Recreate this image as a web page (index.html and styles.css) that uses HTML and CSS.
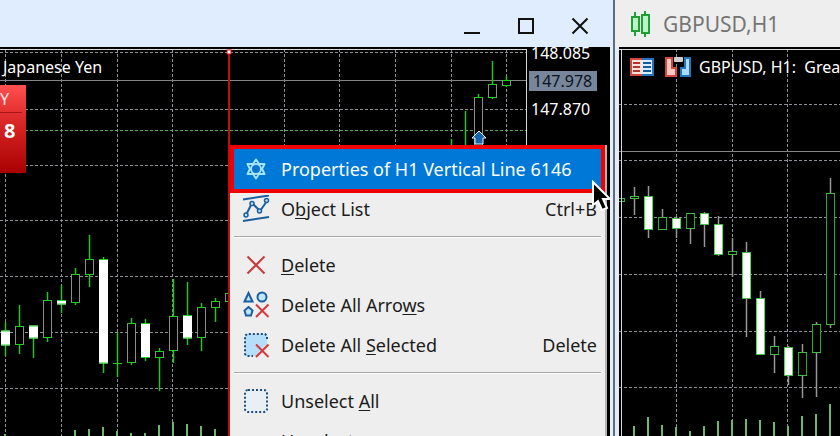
FILE: index.html
```html
<!DOCTYPE html>
<html lang="en">
<head>
    <meta charset="UTF-8">
    <meta name="viewport" content="width=device-width, initial-scale=1.0">
    <title>Charts</title>
    <link rel="stylesheet" href="styles.css">
</head>
<body>
    <div class="desktop">
        <section class="window window-main">
            <header class="titlebar titlebar-active">
                <button class="win-btn" type="button" aria-label="Minimize">
                    <svg width="18" height="18" viewBox="0 0 18 18"><path d="M1 16h16"/></svg>
                </button>
                <button class="win-btn" type="button" aria-label="Maximize">
                    <svg width="18" height="18" viewBox="0 0 18 18"><path d="M2 2h14v14H2z"/></svg>
                </button>
                <button class="win-btn" type="button" aria-label="Close">
                    <svg width="18" height="18" viewBox="0 0 18 18"><path d="M1.500 1.500l15 15M16.500 1.500l-15 15"/></svg>
                </button>
            </header>
            <div class="chart-frame">
                <div class="plot">
                    <svg class="chart" id="chart-left"></svg>
                    <div class="chart-head">Japanese Yen</div>
                    <button class="trade" type="button">
                        <span class="trade-label">Y</span>
                        <span class="trade-price">8</span>
                    </button>
                </div>
                <div class="axis">
                    <span class="price">148.085</span>
                    <span class="price price-now">147.978</span>
                    <span class="price">147.870</span>
                </div>
            </div>

            <div class="menu" role="menu">
                <button class="item active" type="button" role="menuitem">
                    <svg class="icon" viewBox="0 0 28 28" fill="none" stroke-linejoin="round">
                        <path d="M14 4.500l3 4.500h5.500L20 14l2.500 5H17l-3 4.500-3-4.500H5.500L8 14 5.500 9H11z" fill="#0b5ba8" stroke="#a4e4ff" stroke-width="2"/>
                        <circle cx="14" cy="14" r="5" fill="#0b74d0" stroke="#a4e4ff" stroke-width="2"/>
                    </svg>
                    <span class="label">Properties of H1 Vertical Line 6146</span>
                </button>
                <button class="item" type="button" role="menuitem">
                    <svg class="icon" viewBox="0 0 28 28" fill="none" stroke="#1b5f9e" stroke-width="2">
                        <path d="M1 4.500l26-4M1 26l26-4M4 20l6-12 8 8 7-10"/>
                        <g fill="#bfe6ff" stroke-width="1.500">
                            <circle cx="4" cy="20" r="2"/><circle cx="10" cy="8.500" r="2"/>
                            <circle cx="17.500" cy="16" r="2"/><circle cx="24.500" cy="5.500" r="2"/>
                        </g>
                    </svg>
                    <span class="label">O<u>b</u>ject List</span>
                    <span class="key">Ctrl+B</span>
                </button>
                <hr class="sep">
                <button class="item" type="button" role="menuitem">
                    <svg class="icon" viewBox="0 0 28 28" fill="none" stroke="#c93a3a" stroke-width="2">
                        <path d="M5.500 5.500l17 17M22.500 5.500l-17 17"/>
                    </svg>
                    <span class="label"><u>D</u>elete</span>
                </button>
                <button class="item" type="button" role="menuitem">
                    <svg class="icon" viewBox="0 0 28 28" fill="#bfe6ff" stroke="#1b5f9e" stroke-width="2">
                        <path d="M6.500 2l4 8.500h-8zM6.500 16l4 3.500-1.500 5H4l-1.500-5z"/>
                        <circle cx="20" cy="6" r="4.500"/>
                        <path d="M14 13.500l12.500 12.500M26.500 13.500L14 26" fill="none" stroke="#d43a3a"/>
                    </svg>
                    <span class="label">Delete All Arro<u>w</u>s</span>
                </button>
                <button class="item" type="button" role="menuitem">
                    <svg class="icon" viewBox="0 0 28 28" fill="none" stroke-width="2">
                        <path d="M3 3h22v10l-6 5-5 7H3z" fill="#b5defa"/>
                        <path d="M25 8V5l-2-2H5L3 5v18l2 2h6" stroke="#1b4f7e" stroke-dasharray="2 2"/>
                        <path d="M14 13.500l12.500 12.500M26.500 13.500L14 26" stroke="#d43a3a"/>
                    </svg>
                    <span class="label">Delete All <u>S</u>elected</span>
                    <span class="key">Delete</span>
                </button>
                <hr class="sep">
                <button class="item" type="button" role="menuitem">
                    <svg class="icon" viewBox="0 0 28 28">
                        <rect x="3" y="3" width="22" height="22" rx="3" fill="#e8f0f6" stroke="#1b4f7e" stroke-width="2" stroke-dasharray="2 2"/>
                    </svg>
                    <span class="label">Unselect <u>A</u>ll</span>
                </button>
                <button class="item" type="button" role="menuitem">
                    <span class="icon"></span>
                    <span class="label">Unselect</span>
                </button>
            </div>

            <svg class="cursor" width="22" height="32" viewBox="0 0 22 32">
                <path d="M2 2v23l5-4 4 9 5-2-4-9h7z" fill="#000" stroke="#fff" stroke-width="2"/>
            </svg>
        </section>

        <section class="window window-side">
            <header class="titlebar">
                <svg class="title-icon" width="22" height="28" viewBox="0 0 22 28" fill="#b9f5c4" stroke="#1e9e35" stroke-width="2">
                    <path d="M6 2v24M16 1v26" fill="none"/>
                    <path d="M3 7h7v14H3zM13 5h7v18h-7z"/>
                </svg>
                <h1 class="title">GBPUSD,H1</h1>
            </header>
            <div class="chart-frame">
                <div class="plot">
                    <svg class="chart" id="chart-right"></svg>
                    <div class="chart-head">
                        <svg width="26" height="20" viewBox="0 0 26 20">
                            <path d="M1 1h12v18H1z" fill="#d3473f"/>
                            <path d="M13 1h12v18H13z" fill="#2374bd"/>
                            <path d="M3 3h10v14H3z" fill="#ffe1dc"/>
                            <path d="M13 3h10v14H13z" fill="#d8efff"/>
                            <path d="M4 6h7M4 10h7M4 14h7" stroke="#b8332c" stroke-width="2"/>
                            <path d="M14 6h8M14 10h8M14 14h8" stroke="#17599a" stroke-width="2"/>
                        </svg>
                        <svg width="26" height="20" viewBox="0 0 26 20">
                            <path d="M1 1h6v10h4v8H1z" fill="#ffc9c2" stroke="#d3473f" stroke-width="2"/>
                            <path d="M25 1h-5v10h-4v8h9z" fill="#a9dcff" stroke="#2374bd" stroke-width="2"/>
                            <rect x="9" y="0" width="9" height="5" rx="1" fill="#d0d0d0"/>
                        </svg>
                        <span class="chart-name">GBPUSD, H1:&nbsp; Grea</span>
                    </div>
                </div>
            </div>
        </section>
    </div>

    <script src="script.js"></script>
</body>
</html>
```
FILE: styles.css
```css
* {
    margin: 0;
    padding: 0;
    box-sizing: border-box;
}

body {
    font-family: "Noto Sans", "Open Sans", sans-serif;
    font-size: 16px;
    background: #eee;
    overflow: hidden;
}

button {
    font: inherit;
    color: inherit;
    background: none;
    border: none;
}

.desktop {
    display: flex;
    height: 100vh;
    overflow: hidden;
}

/* Windows */
.window {
    position: relative;
    display: flex;
    flex-direction: column;
    min-width: 0;
}

.window-main {
    flex: 1;
    border-right: 2px solid #5d6c80;
}

.window-side {
    flex: 0 0 225px;
}

.titlebar {
    display: flex;
    align-items: center;
    flex: 0 0 47px;
    gap: 12px;
    padding: 0 14px;
    background: #eee;
    color: #757575;
}

.titlebar-active {
    justify-content: flex-end;
    gap: 0;
    padding: 4px 6px 0;
    background: #dfedfe;
}

.title {
    font-size: 21px;
    font-weight: 400;
    line-height: 30px;
}

.win-btn {
    width: 54px;
    height: 32px;
}

.win-btn svg {
    display: block;
    margin: auto;
    fill: none;
    stroke: #111;
    stroke-width: 2;
}

/* Charts */
.chart-frame {
    display: flex;
    flex: 1;
    min-height: 0;
    background: #000;
}

.window-main .chart-frame {
    border-right: 3px solid #e8eef5;
}

.window-side .chart-frame {
    border-left: 4px solid #e4ebf5;
}

.plot {
    position: relative;
    flex: 1;
    min-width: 0;
    overflow: hidden;
}

.chart {
    position: absolute;
    width: 100%;
    height: 100%;
}

.chart-head {
    position: relative;
    display: flex;
    align-items: center;
    gap: 12px;
    height: 40px;
    padding-left: 3px;
    color: #fff;
    white-space: nowrap;
}

.window-side .chart-head {
    gap: 10px;
    padding-left: 10px;
}

.window-side .chart-head svg {
    flex: none;
}

.chart-name {
    margin-left: -2px;
}

.axis {
    display: flex;
    flex-direction: column;
    gap: 8px;
    flex: 0 0 83px;
    padding-left: 2px;
    margin-top: -4px;
    color: #fff;
    line-height: 20px;
}

.price {
    width: 68px;
    padding-left: 2px;
}

.price-now {
    background: #77869b;
    color: #0c121c;
    padding-left: 4px;
}

.trade {
    position: relative;
    display: block;
    width: 26px;
    height: 88px;
    margin-top: -2px;
    overflow: hidden;
    background: linear-gradient(#ff5050, #e02c2c 35%, #a80000);
    color: #fff;
    text-align: left;
}

.trade-label,
.trade-price {
    display: block;
    height: 28px;
    line-height: 28px;
}

.trade-label {
    width: 22px;
    margin-bottom: 4px;
    border-bottom: 1px solid #a51616;
    color: #ffe4e4;
}

.trade-price {
    height: 56px;
    padding-left: 4px;
    font-size: 20px;
    font-weight: 700;
}

/* Context menu */
.menu {
    position: absolute;
    top: 145px;
    left: 230px;
    right: 6px;
    padding: 4px;
    background: #eee;
    border-right: 2px solid #b4b4b4;
    color: #1c1c1c;
    font-size: 18px;
}

.item {
    display: flex;
    align-items: center;
    width: 100%;
    height: 40px;
    padding: 0 4px 0 8px;
    text-align: left;
    white-space: nowrap;
}

.item.active {
    background: #0078d7;
    color: #fff;
    outline: 4px solid #f00000;
}

.icon {
    flex: none;
    width: 28px;
    height: 28px;
    margin-right: 11px;
}

.label {
    flex: 1;
}

.label u {
    text-underline-offset: 2px;
}

.sep {
    height: 2px;
    margin: 7px 0;
    border: none;
    border-top: 1px solid #a8a8a8;
    border-bottom: 1px solid #fff;
}

.cursor {
    position: absolute;
    top: 180px;
    left: 591px;
}
```
FILE: script.js
```javascript
const NS = 'http://www.w3.org/2000/svg';
const TITLEBAR = 47;
const STEP = 14;

function add(parent, tag, attrs) {
    const el = document.createElementNS(NS, tag);
    for (const name in attrs) {
        el.setAttribute(name, attrs[name]);
    }
    parent.appendChild(el);
    return el;
}

function line(parent, x1, y1, x2, y2, stroke, width, dash) {
    const attrs = { x1, y1, x2, y2, stroke, 'stroke-width': width || 1 };
    if (dash) attrs['stroke-dasharray'] = dash;
    add(parent, 'line', attrs);
}

// candle: [x, high, top, bottom, low, filled]
function drawCandle(g, candle, style) {
    const [x, high, top, bottom, low, filled] = candle;
    line(g, x, high, x, top, style.wick, 1.5);
    line(g, x, bottom, x, low, style.wick, 1.5);
    if (bottom > top) {
        add(g, 'rect', {
            x: x - 4, y: top, width: 8, height: bottom - top,
            fill: filled ? '#fff' : '#000',
            stroke: filled ? style.full : style.body
        });
    }
    line(g, x - 4.5, top, x + 4.5, top, style.cap);
    line(g, x - 4.5, bottom, x + 4.5, bottom, style.cap);
}

function drawChart(id, data) {
    const svg = document.getElementById(id);
    const g = add(svg, 'g', { transform: `translate(${-data.left} ${-TITLEBAR})` });

    data.columns.forEach(x => line(g, x, 49, x, 900, '#8f8f98', 1, '3 2'));
    data.rows.forEach(y => line(g, data.left, y, data.right, y, '#8f8f98', 1, '3 2'));
    line(g, data.left, data.price, data.right, data.price, '#858585');
    if (data.order) line(g, data.left, data.order, data.right, data.order, '#58a858', 1, '3 2');

    data.volumes.forEach(([x, y]) => line(g, x, y, x, 900, '#6cb86c', 2));
    data.candles.forEach(candle => drawCandle(g, candle, data.style));

    // frame
    line(g, data.left, 49.5, data.right, 49.5, '#d8d8d8');
    line(g, data.frame, 49, data.frame, 900, '#d8d8d8');
    return g;
}

function series(start, values) {
    return values.map((v, i) => [start + i * STEP].concat(v));
}

const left = drawChart('chart-left', {
    left: 0,
    right: 527,
    frame: 526.5,
    price: 80.5,
    order: 130.5,
    columns: [5.5, 61.5, 117.5, 172.5, 228.5, 284.5, 339.5, 395.5, 451.5, 506.5],
    rows: [52.5, 109.5, 165.5, 220.5, 276.5, 332.5, 388.5],
    style: { wick: '#25c425', body: '#8d8d8d', full: '#fff', cap: '#20d020' },
    volumes: series(5, [434, 436, 436, 436, 436, 430, 429, 427, 431, 433, 433, 425, 422, 424, 426, 429, 430]),
    candles: series(5.5, [
        [322, 331, 345, 356, 1],
        [305, 326.5, 344.5, 354],
        [326, 326, 338, 358, 1],
        [292, 300.5, 337.5, 342],
        [285, 300.5, 304, 313, 1],
        [268, 274.5, 302.5, 305],
        [235, 259.5, 274.5, 287],
        [257, 259.5, 363, 373, 1],
        [332, 363.5, 363.5, 377],
        [318, 323.5, 362.5, 365],
        [319, 323.5, 357.5, 361, 1],
        [348, 351.5, 357.5, 391],
        [279, 316.5, 350.5, 363],
        [282, 315.5, 338, 345, 1],
        [303, 307.5, 337.5, 351],
        [298, 301.5, 307.5, 322],
        [293, 293.5, 301.5, 301]
    ]).concat([
        [451.5, 139, 150, 170, 180],
        [465.5, 111, 150, 170, 180],
        [478.5, 94, 97.5, 160.5, 165],
        [492.5, 61, 84.5, 97.5, 99],
        [506.5, 76, 80.5, 85.5, 87]
    ])
});

// selected vertical line with its anchor
line(left, 229, 50, 229, 900, '#c40d10', 2);
add(left, 'rect', { x: 227, y: 50, width: 4, height: 4, fill: '#fff', stroke: '#e01010' });

// buy arrow
add(left, 'path', { d: 'M479 131l7 7h-3v6h-8v-6h-3z', fill: '#1766ad', stroke: '#e4f2ff' });

drawChart('chart-right', {
    left: 619,
    right: 1400,
    frame: 621.5,
    price: 151.5,
    columns: [676.5, 732.5, 787.5],
    rows: [104.5, 160.5, 217.5, 274.5, 331.5, 387.5],
    style: { wick: '#979797', body: '#2da82d', full: '#4fe04f', cap: '#45b845' },
    volumes: series(634, [426, 417, 425, 427, 431, 426, 421, 420, 419, 420, 422, 426, 416, 414, 404]),
    candles: series(620.5, [
        [198, 198.5, 201.5, 201],
        [187, 196.5, 198.5, 215],
        [186, 196.5, 229.5, 238, 1],
        [209, 217.5, 229.5, 230],
        [216, 218.5, 228.5, 238, 1],
        [213, 213.5, 228.5, 244],
        [212, 213.5, 224.5, 247, 1],
        [216, 224.5, 254.5, 256, 1],
        [238, 251.5, 254.5, 277],
        [242, 252.5, 298.5, 337, 1],
        [291, 298.5, 354.5, 355, 1],
        [336, 346.5, 354.5, 373],
        [346, 347.5, 375.5, 385, 1],
        [344, 352.5, 375.5, 398],
        [322, 324.5, 352.5, 397],
        [178, 193.5, 324.5, 328],
        [193, 193.5, 200.5, 200, 1]
    ])
});
```
